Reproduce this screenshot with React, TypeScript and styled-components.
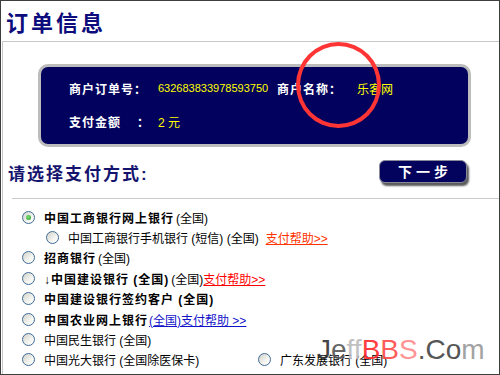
import React from "react";
import styled, { createGlobalStyle } from "styled-components";

const GlobalStyle = createGlobalStyle`
  body {
    margin: 0;
    background: #fff;
    font-family: "Liberation Sans", "Noto Sans CJK SC", sans-serif;
  }
`;

const Frame = styled.div`
  position: relative;
  width: 500px;
  height: 375px;
  box-sizing: border-box;
  border: 1px solid #3e3e3e;
  overflow: hidden;
  background: #fff;
`;

const Title = styled.h1`
  margin: 0;
  height: 40px;
  display: flex;
  align-items: center;
  padding-left: 5px;
  font-size: 22px;
  font-weight: 700;
  letter-spacing: 3px;
  color: #0c0c7c;
`;

const Content = styled.div`
  margin-left: 1px;
  height: 332px;
  border-top: 1px solid #c8c8c8;
  border-left: 1px solid #c8c8c8;
`;

const Panel = styled.div`
  margin: 22px 0 0 35px;
  width: 433px;
  height: 83px;
  box-sizing: border-box;
  border: 3px solid #bcbcbc;
  border-radius: 10px;
  background: #02025e;
  padding: 14px 0 0 28px;
  display: flex;
  flex-direction: column;
  gap: 19px;
`;

const PanelRow = styled.div`
  display: flex;
  align-items: center;
  height: 14px;
  font-size: 12px;
`;

const Label = styled.span<{ $w: number }>`
  width: ${(p) => p.$w}px;
  flex-shrink: 0;
  color: #fff;
  font-weight: 700;
  letter-spacing: 1px;
  display: flex;
`;

const ColonGap = styled.span`
  margin-left: 16px;
`;

const Value = styled.span<{ $w?: number; $size?: number }>`
  width: ${(p) => (p.$w ? `${p.$w}px` : "auto")};
  flex-shrink: 0;
  color: #ffff00;
  font-size: ${(p) => p.$size ?? 11}px;
`;

const SelectBar = styled.div`
  margin-top: 12px;
  height: 24px;
  display: flex;
  align-items: center;
  justify-content: space-between;
  padding: 0 32px 0 5px;
`;

const Heading = styled.h2`
  margin: 2px 0 0;
  font-size: 17px;
  font-weight: 700;
  letter-spacing: 2px;
  color: #14146e;
`;

const NextButton = styled.button`
  width: 88px;
  height: 23px;
  border: 1px solid #8a8a9a;
  border-radius: 6px;
  background: #03035e;
  box-shadow: 2px 3px 2px #5a5a5a;
  color: #fff;
  font-family: inherit;
  font-size: 14px;
  font-weight: 700;
  letter-spacing: 4px;
  padding: 0 0 0 4px;
  cursor: pointer;
`;

const Divider = styled.div`
  margin: 15px 0 0 9px;
  height: 1px;
  background: #cacaca;
`;

const List = styled.div`
  padding-top: 8px;
  display: flex;
  flex-direction: column;
`;

const Row = styled.div<{ $indent: number }>`
  display: flex;
  align-items: center;
  height: 20.4px;
  padding-left: ${(p) => p.$indent}px;
  font-size: 12px;
  color: #000;
  white-space: nowrap;
`;

const Option = styled.label<{ $w?: number }>`
  display: flex;
  align-items: center;
  width: ${(p) => (p.$w ? `${p.$w}px` : "auto")};
  flex-shrink: 0;
`;

const Radio = styled.span<{ $checked?: boolean }>`
  position: relative;
  width: 13px;
  height: 13px;
  box-sizing: border-box;
  border-radius: 50%;
  border: 1px solid #3f6b96;
  background: linear-gradient(135deg, #d2d2ca 0%, #f4f4f0 60%, #ffffff 100%);
  margin-right: 9px;
  flex-shrink: 0;

  &::after {
    content: "";
    display: ${(p) => (p.$checked ? "block" : "none")};
    position: absolute;
    left: 3px;
    top: 3px;
    width: 5px;
    height: 5px;
    border-radius: 50%;
    background: radial-gradient(circle at 40% 40%, #7fe07f, #1f9a1f);
  }
`;

const Bold = styled.b`
  font-weight: 700;
  letter-spacing: 1px;
`;

const Rest = styled.span`
  margin-left: 2px;
`;

const Help = styled.a<{ $color: string; $gap?: number }>`
  color: ${(p) => p.$color};
  text-decoration: underline;
  margin-left: ${(p) => p.$gap ?? 0}px;
  cursor: pointer;
`;

const Circle = styled.div`
  position: absolute;
  left: 295px;
  top: 41px;
  width: 85px;
  height: 86px;
  box-sizing: border-box;
  border: 4px solid #ff3535;
  border-radius: 50%;
  pointer-events: none;
`;

const Watermark = styled.div`
  position: absolute;
  left: 316px;
  top: 333px;
  font-family: "Liberation Sans", Arial, sans-serif;
  font-size: 28px;
  line-height: 32px;
  opacity: 0.9;
  pointer-events: none;
`;

const Mark = styled.span<{ $c: string }>`
  color: ${(p) => p.$c};
`;

type Bank = {
  indent: number;
  checked?: boolean;
  bold?: string;
  rest?: string;
  normal?: string;
  help?: { text: string; color: string; gap: number };
};

const banks: Bank[] = [
  { indent: 19, checked: true, bold: "中国工商银行网上银行", rest: "(全国)" },
  {
    indent: 43,
    normal: "中国工商银行手机银行 (短信) (全国)",
    help: { text: "支付帮助>>", color: "#ff3300", gap: 7 },
  },
  { indent: 19, bold: "招商银行", rest: "(全国)" },
  {
    indent: 19,
    bold: "↓中国建设银行 (全国)",
    rest: "(全国)",
    help: { text: "支付帮助>>", color: "#ff0000", gap: 0 },
  },
  { indent: 19, bold: "中国建设银行签约客户 (全国)" },
  {
    indent: 19,
    bold: "中国农业网上银行",
    help: { text: "(全国)支付帮助 >>", color: "#1212c8", gap: 1 },
  },
  { indent: 19, normal: "中国民生银行 (全国)" },
];

export default function App() {
  return (
    <>
      <GlobalStyle />
      <Frame>
        <Title>订单信息</Title>
        <Content>
          <Panel>
            <PanelRow>
              <Label $w={89}>商户订单号：</Label>
              <Value $w={119}>632683833978593750</Value>
              <Label $w={80}>商户名称：</Label>
              <Value $size={12}>乐客网</Value>
            </PanelRow>
            <PanelRow>
              <Label $w={89}>
                支付金额<ColonGap>：</ColonGap>
              </Label>
              <Value $size={12}>2 元</Value>
            </PanelRow>
          </Panel>

          <SelectBar>
            <Heading>请选择支付方式:</Heading>
            <NextButton>下一步</NextButton>
          </SelectBar>
          <Divider />

          <List>
            {banks.map((b, i) => (
              <Row key={i} $indent={b.indent}>
                <Option>
                  <Radio $checked={b.checked} />
                  {b.bold && <Bold>{b.bold}</Bold>}
                  {b.rest && <Rest>{b.rest}</Rest>}
                  {b.normal}
                </Option>
                {b.help && (
                  <Help $color={b.help.color} $gap={b.help.gap}>
                    {b.help.text}
                  </Help>
                )}
              </Row>
            ))}
            <Row $indent={19}>
              <Option $w={236}>
                <Radio />
                中国光大银行 (全国除医保卡)
              </Option>
              <Option>
                <Radio />
                广东发展银行 (全国)
              </Option>
            </Row>
          </List>
        </Content>

        <Circle />
        <Watermark>
          <Mark $c="#333">J</Mark>
          <Mark $c="#555">e</Mark>
          <Mark $c="#bbb">ff</Mark>
          <Mark $c="#ff2a2a">B</Mark>
          <Mark $c="#ff4a4a">B</Mark>
          <Mark $c="#ff8a8a">S</Mark>
          <Mark $c="#444">.Co</Mark>
          <Mark $c="#999">m</Mark>
        </Watermark>
      </Frame>
    </>
  );
}
